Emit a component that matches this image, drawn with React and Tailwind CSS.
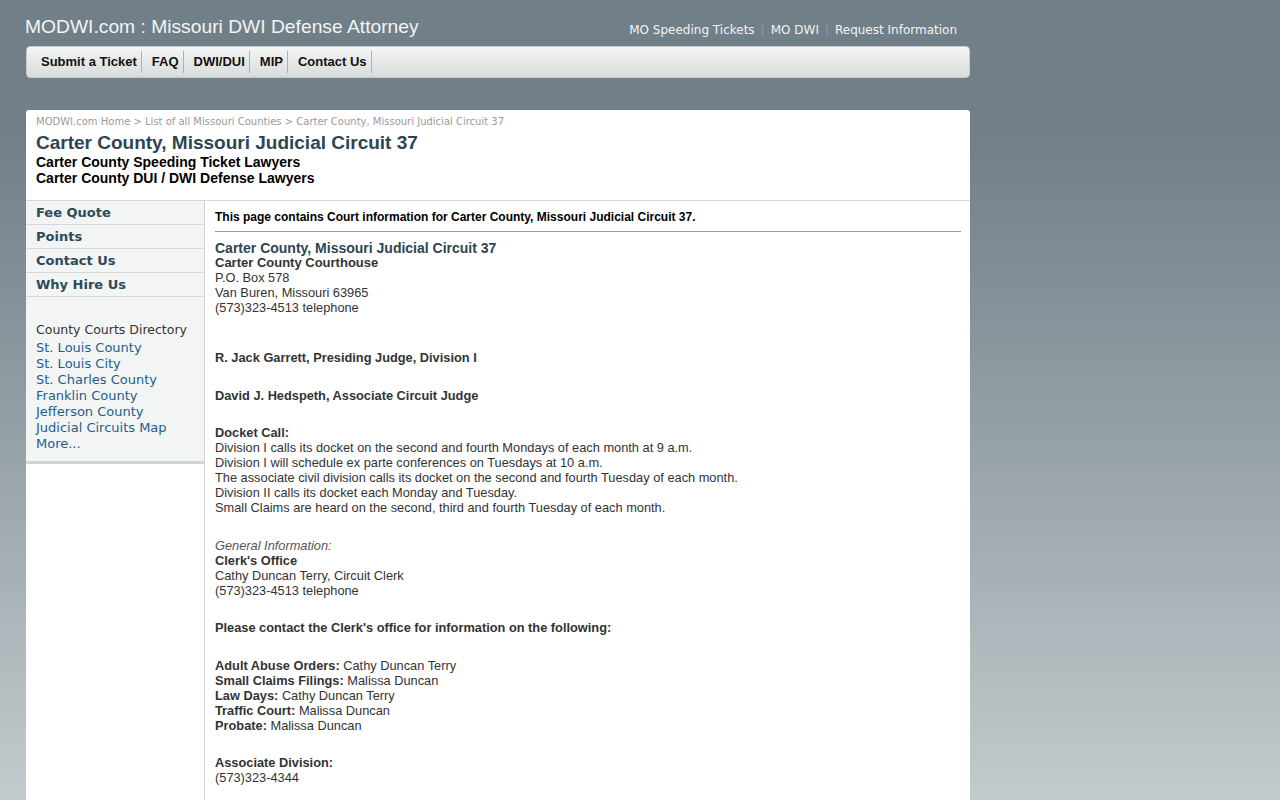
import React from 'react';

const navItems = ['Submit a Ticket', 'FAQ', 'DWI/DUI', 'MIP', 'Contact Us'];
const sideMenu = ['Fee Quote', 'Points', 'Contact Us', 'Why Hire Us'];
const courtLinks = [
  'St. Louis County',
  'St. Louis City',
  'St. Charles County',
  'Franklin County',
  'Jefferson County',
  'Judicial Circuits Map',
  'More...',
];

const docket = [
  'Division I calls its docket on the second and fourth Mondays of each month at 9 a.m.',
  'Division I will schedule ex parte conferences on Tuesdays at 10 a.m.',
  'The associate civil division calls its docket on the second and fourth Tuesday of each month.',
  'Division II calls its docket each Monday and Tuesday.',
  'Small Claims are heard on the second, third and fourth Tuesday of each month.',
];

const contacts = [
  ['Adult Abuse Orders:', 'Cathy Duncan Terry'],
  ['Small Claims Filings:', 'Malissa Duncan'],
  ['Law Days:', 'Cathy Duncan Terry'],
  ['Traffic Court:', 'Malissa Duncan'],
  ['Probate:', 'Malissa Duncan'],
];

const App = () => {
  return (
    <div className="min-h-[800px] bg-[linear-gradient(to_bottom,#717f88_0px,#717f88_140px,#c3cacc_800px)] font-['Liberation_Sans',Arial,sans-serif]">
      <div className="w-[944px] ml-[26px]">
        {/* Header */}
        <div className="flex items-end justify-between h-[40px] pb-[2px]">
          <div className="text-[19.25px] leading-[24px] text-[#f2f4f5] -ml-[1px] -mb-[1px]">
            MODWI.com : Missouri DWI Defense Attorney
          </div>
          <div className="flex items-center mr-[13px] font-['DejaVu_Sans',Verdana,sans-serif] text-[12px] text-[#f2f4f5] leading-[16px]">
            <span>MO Speeding Tickets</span>
            <span className="mx-[6px] text-[#8c989f]">|</span>
            <span>MO DWI</span>
            <span className="mx-[6px] text-[#8c989f]">|</span>
            <span>Request Information</span>
          </div>
        </div>

        {/* Nav bar */}
        <div className="mt-[6px] h-[32px] rounded-[4px] border border-[#c7cbcc] bg-[linear-gradient(to_bottom,#f4f5f5,#d9dcdc)] flex items-center pl-[4px]">
          {navItems.map((item) => (
            <div
              key={item}
              className="pl-[10px] pr-[4px] border-r border-[#a9b2b5] text-[13px] font-bold text-[#111] leading-[22px]"
            >
              {item}
            </div>
          ))}
        </div>

        {/* Content box */}
        <div className="mt-[32px] bg-white rounded-t-[3px]">
          <div className="px-[10px] pt-[6px] pb-[14px] border-b border-[#d4d8d9]">
            <div className="font-['DejaVu_Sans',Verdana,sans-serif] text-[10px] text-[#9a9a9a] leading-[12px]">
              MODWI.com Home &gt; List of all Missouri Counties &gt; Carter County, Missouri Judicial Circuit 37
            </div>
            <h1 className="text-[19px] font-bold text-[#2c4651] leading-[22px] mt-[4px]">
              Carter County, Missouri Judicial Circuit 37
            </h1>
            <div className="text-[14px] font-bold text-black leading-[16px]">
              Carter County Speeding Ticket Lawyers
            </div>
            <div className="text-[14px] font-bold text-black leading-[16px]">
              Carter County DUI / DWI Defense Lawyers
            </div>
          </div>

          <div className="flex">
            {/* Sidebar */}
            <div className="w-[179px] shrink-0 border-r border-[#cfd3d4]">
              <div className="bg-[#f3f5f5] border-b-[3px] border-[#d3d6d7] pb-[9px]">
                {sideMenu.map((item) => (
                  <div
                    key={item}
                    className="h-[24px] border-b border-[#d5d9da] pl-[10px] pt-[1px] flex items-center font-['DejaVu_Sans',Verdana,sans-serif] font-bold text-[13px] text-[#2c4a57]"
                  >
                    {item}
                  </div>
                ))}
                <div className="pl-[10px] pt-[25px]">
                  <div className="font-['DejaVu_Sans',Verdana,sans-serif] text-[12.5px] text-[#333] leading-[16px] mb-[2px]">
                    County Courts Directory
                  </div>
                  {courtLinks.map((link) => (
                    <div
                      key={link}
                      className="font-['DejaVu_Sans',Verdana,sans-serif] text-[13px] text-[#1d5d8e] leading-[16px]"
                    >
                      {link}
                    </div>
                  ))}
                </div>
              </div>
            </div>

            {/* Main */}
            <div className="flex-1 pl-[10px] pr-[9px] pt-[9px] text-[12.8px] text-[#333] leading-[15px] pb-[40px]">
              <div className="text-[12px] font-bold text-black leading-[15px]">
                This page contains Court information for Carter County, Missouri Judicial Circuit 37.
              </div>
              <div className="mt-[6px] border-t border-[#9a9a9a]" />

              <div className="mt-[9px]">
                <div className="text-[14px] font-bold text-[#2c4651] leading-[14px]">Carter County, Missouri Judicial Circuit 37</div>
                <div className="text-[13px] font-bold">Carter County Courthouse</div>
                <div>P.O. Box 578</div>
                <div>Van Buren, Missouri 63965</div>
                <div>(573)323-4513 telephone</div>
              </div>

              <div className="mt-[35px] font-bold">R. Jack Garrett, Presiding Judge, Division I</div>
              <div className="mt-[23px] font-bold">David J. Hedspeth, Associate Circuit Judge</div>

              <div className="mt-[22px]">
                <div className="font-bold">Docket Call:</div>
                {docket.map((line) => (
                  <div key={line}>{line}</div>
                ))}
              </div>

              <div className="mt-[23px]">
                <div className="italic text-[#555]">General Information:</div>
                <div className="font-bold">Clerk's Office</div>
                <div>Cathy Duncan Terry, Circuit Clerk</div>
                <div>(573)323-4513 telephone</div>
              </div>

              <div className="mt-[22px] font-bold">Please contact the Clerk's office for information on the following:</div>

              <div className="mt-[23px]">
                {contacts.map(([label, name]) => (
                  <div key={label}>
                    <span className="font-bold">{label}</span> {name}
                  </div>
                ))}
              </div>

              <div className="mt-[22px]">
                <div className="font-bold">Associate Division:</div>
                <div>(573)323-4344</div>
              </div>
            </div>
          </div>
        </div>
      </div>
    </div>
  );
};

export default App;
